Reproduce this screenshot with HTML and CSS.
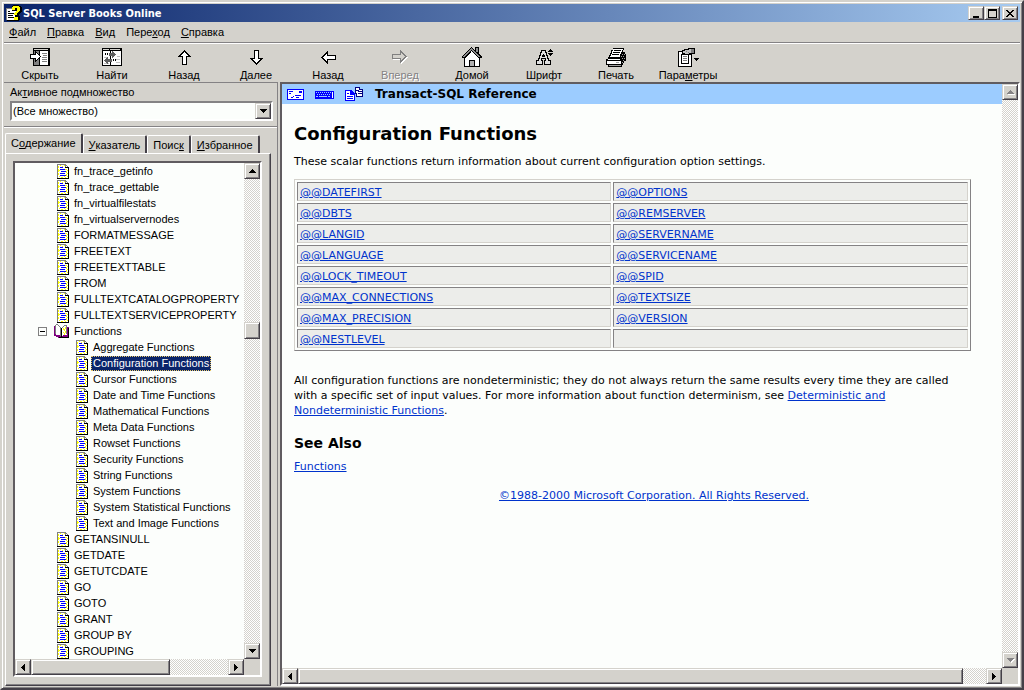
FILE: index.html
```html
<!DOCTYPE html>
<html lang="ru">
<head>
  <meta charset="UTF-8">
  <meta name="viewport" content="width=device-width, initial-scale=1.0">
  <title>SQL Server Books Online</title>
  <link rel="stylesheet" href="styles.css">
</head>
<body>

  <!-- Shared icons -->
  <svg class="sprite" aria-hidden="true">
    <symbol id="topic" viewBox="0 0 12 15">
      <path fill="#fff" d="M1 1h7l3 3v10H1z"/>
      <path fill="#ffff00" d="M1 2h1v2H1zM3 1h1v1H3zM5 2h1v1H5zM7 1h1v1H7zM1 5h1v3H1zM2 6h1v1H2zM8 5h2v1H8zM9 7h1v2H9zM1 9h1v2H1zM9 10h1v2H9zM2 12h1v1H2zM4 13h2v1H4zM7 12h1v1H7zM8 13h1v1H8zM10 12h1v1h-1zM10 6h1v1h-1zM10 9h1v1h-1z"/>
      <path fill="#808080" d="M0 0h9v1H0zM0 1h1v13H0zM8 1h1v2H8zM9 1h1v1H9zM10 2h1v1h-1z"/>
      <path fill="#000" d="M8 3h4v1H8zM11 4h1v11h-1zM0 14h12v1H0z"/>
      <path fill="#0000ff" d="M3 3h3v1H3zM3 5h5v1H3zM4 7h5v1H4zM3 9h5v1H3zM3 11h6v1H3z"/>
    </symbol>
    <symbol id="up" viewBox="0 0 7 4"><path d="M3 0h1v1h1v1h1v1h1v1H0V3h1V2h1V1h1z"/></symbol>
    <symbol id="down" viewBox="0 0 7 4"><path d="M0 0h7v1H6v1H5v1H4v1H3V3H2V2H1V1H0z"/></symbol>
    <symbol id="left" viewBox="0 0 4 7"><path d="M4 0v7H3V6H2V5H1V4H0V3h1V2h1V1h1V0z"/></symbol>
    <symbol id="right" viewBox="0 0 4 7"><path d="M0 0v7h1V6h1V5h1V4h1V3H3V2H2V1H1V0z"/></symbol>
  </svg>

  <div class="window">
    <header class="titlebar">
      <svg class="app-icon" width="16" height="16" viewBox="0 0 16 16">
        <path fill="#808080" d="M0 3h9v1H1v11H0z"/>
        <path fill="#fff" d="M1 4h9v11H1z"/>
        <path fill="#000" d="M2 6h2v1H2zM2 8h6v1H2zM2 10h5v1H2zM2 12h6v1H2zM10 12h1v4H1v-1h9z"/>
        <path fill="#000" d="M6 1h1V0h6v1h2v1h1v5h-1v1h-1v1h-1v2h1v4h-1v1H8v-4h1V8h1V6H6z"/>
        <path fill="#ffff00" d="M6 2h1V1h6v1h1v4h-1v1h-1v1h-1v2H8V8h1V7h1V6h1V3H9v2H6zM8 12h4v3H8z"/>
      </svg>
      <h1 class="caption">SQL Server Books Online</h1>
      <button class="win-button" aria-label="Свернуть"><svg width="9" height="9" viewBox="0 0 9 9"><path d="M1 7h6v2H1z"/></svg></button>
      <button class="win-button" aria-label="Развернуть"><svg width="9" height="9" viewBox="0 0 9 9"><path fill-rule="evenodd" d="M0 0h9v9H0zM1 2v6h7V2z"/></svg></button>
      <button class="win-button close" aria-label="Закрыть"><svg width="8" height="7" viewBox="0 0 8 7"><path d="M0 0h2v1h1v1h2V1h1V0h2v1H7v1H6v1H5v1h1v1h1v1h1v1H6V6H5V5H3v1H2v1H0V6h1V5h1V4h1V3H2V2H1V1H0z"/></svg></button>
    </header>

    <nav class="menu">
      <a href="#file"><u>Ф</u>айл</a>
      <a href="#edit"><u>П</u>равка</a>
      <a href="#view"><u>В</u>ид</a>
      <a href="#go">Пере<u>х</u>од</a>
      <a href="#help"><u>С</u>правка</a>
    </nav>

    <div class="toolbar">
      <button class="tool">
        <svg width="20" height="18" viewBox="0 0 20 18">
          <path d="M3 0h17v18H3z"/>
          <path fill="#d4d2cc" d="M4 1h14v1H4z"/>
          <path fill="#808080" d="M4 3h5v14H4z"/>
          <path fill="#fff" d="M10 3h8v14h-8z"/>
          <path fill="#808080" d="M12 5h5v1h-5zM13 7h4v1h-4zM12 9h5v1h-5zM12 11h5v1h-5zM12 13h5v1h-5z"/>
          <path d="M5 3h1v1h1v1h1v1h1v1h1v1h1v1h-1v1H9v1H8v1H7v1H6v1H5v-3H0V6h5z"/>
          <path fill="#fff" d="M6 5h1v1h1v1h1v1h1v1H9v1H8v1H7v1H6v-2H1V7h5z"/>
        </svg>
        <span>Скрыть</span>
      </button>
      <button class="tool">
        <svg width="20" height="18" viewBox="0 0 20 18">
          <path d="M0 0h20v18H0z"/>
          <path fill="#d4d2cc" d="M1 1h6v1H1zM8 1h10v1H8z"/>
          <path fill="#fff" d="M1 3h18v14H1z"/>
          <path fill="#c0c0c0" d="M2 9h4v1H2zM2 15h5v1H2zM15 8h3v1h-3zM14 11h4v1h-4zM14 14h4v1h-4z"/>
          <path d="M8 3h1v14H8zM3 5h1v2H3zM5 5h1v2H5zM11 11h1v2h-1zM13 11h1v2h-1z"/>
          <path fill="#606060" d="M7 5h3V3h1v1h1v1h1v1h1v1h-1v1h-1v1h-1v1h-1V8H7zM10 11H6V9H5v1H4v1H3v1H2v1h1v1h1v1h1v1h1v-2h4z"/>
        </svg>
        <span>Найти</span>
      </button>
      <button class="tool">
        <svg width="13" height="15" viewBox="0 0 13 15"><path d="M6 0h1v1h1v1h1v1h1v1h1v1h1v1h1v1H9v8H4V7H0V6h1V5h1V4h1V3h1V2h1V1h1z"/><path fill="#fff" d="M6 2h1v1h1v1h1v1h1v1H8v8H5V6H3V5h1V4h1V3h1z"/></svg>
        <span>Назад</span>
      </button>
      <button class="tool">
        <svg width="13" height="15" viewBox="0 0 13 15"><path d="M6 15h1v-1h1v-1h1v-1h1v-1h1v-1h1V9h1V8H9V0H4v8H0v1h1v1h1v1h1v1h1v1h1v1h1z"/><path fill="#fff" d="M6 13h1v-1h1v-1h1v-1h1V9H8V1H5v8H3v1h1v1h1v1h1z"/></svg>
        <span>Далее</span>
      </button>
      <button class="tool">
        <svg width="15" height="13" viewBox="0 0 15 13"><path d="M0 6v1h1v1h1v1h1v1h1v1h1v1h1v1h1V9h8V4H7V0H6v1H5v1H4v1H3v1H2v1H1v1z"/><path fill="#fff" d="M2 6v1h1v1h1v1h1v1h1V8h8V5H6V3H5v1H4v1H3v1z"/></svg>
        <span>Назад</span>
      </button>
      <button class="tool" disabled>
        <svg width="16" height="14" viewBox="0 0 16 14"><path fill="#fff" d="M9 1l7 7-7 6v-4H1V5h8z"/><path fill="#808080" d="M15 6v1h-1v1h-1v1h-1v1h-1v1h-1v1H9v1H8V9H0V4h8V0h1v1h1v1h1v1h1v1h1v1h1v1z"/><path fill="#d4d2cc" d="M13 6v1h-1v1h-1v1h-1v1H9V8H1V5h8V3h1v1h1v1h1v1z"/></svg>
        <span>Вперед</span>
      </button>
      <button class="tool">
        <svg width="20" height="20" viewBox="0 0 20 20">
          <path d="M9 0h1v1h1v1h1v1h1V0h4v7h1v1h1v1h1v2h-2v9H2v-9H0V9h1V8h1V7h1V6h1V5h1V4h1V3h1V2h1V1h1z"/>
          <path fill="#909090" d="M9 1h1v1h1v1h1v1h1v1h1v1h1v1h1v1h1v1h1v1h-2V9h-1V8h-1V7h-1V6h-1V5h-1V4h-1V3H9v1H8v1H7v1H6v1H5v1H4v1H3v1H1V9h1V8h1V7h1V6h1V5h1V4h1V3h1V2h1zM14 1h2v4h-2z"/>
          <path fill="#fff" d="M9 4h1v1h1v1h1v1h1v1h1v1h1v1h1v1h1v8h-4v-6H7v6H3v-8h1v-1h1V9h1V8h1V7h1V6h1z"/>
          <path fill="#b0b0b0" d="M8 14h4v5H8z"/>
        </svg>
        <span>Домой</span>
      </button>
      <button class="tool">
        <svg width="17" height="16" viewBox="0 0 17 16">
          <path d="M5 1h5v2h1v3h1v3h1v2h2v5H8v-5h1v-1H6v1h1v5H0v-5h2V9h1V6h1V3h1z"/>
          <path fill="#e0e0e0" d="M6 2h3v2h1v3h1v3h1v2h2v3H9v-3h1v-3H5v3h1v3H1v-3h2v-2h1V7h1V4h1z"/>
          <path d="M7 5h1v1h1v2H6V6h1zM14 0h1v1h1v1h1v1h-5V2h1V1h1zM12 4h5v1h-1v1h-1v1h-1V6h-1V5h-1z"/>
        </svg>
        <span>Шрифт</span>
      </button>
      <button class="tool">
        <svg width="21" height="19" viewBox="0 0 21 19">
          <path d="M7 0h11v2h-1v2h2v2h1v7h-2v2h-1v2h-1v2H2v-2H0v-6h2V9h1V7h1V5h1V2h2z"/>
          <path fill="#fff" d="M7 1h10v1h-1v2h-1v2h-1v3H4V8h1V6h1V3h1zM2 11h12v1H2zM1 13h14v3H1z"/>
          <path d="M8 2h7v1H8zM7 4h7v1H7zM6 6h7v1H6z"/>
          <path fill="#a0a0a0" d="M16 6h1v1h-1zM18 6h1v1h-1zM15 8h1v1h-1zM17 8h1v1h-1zM16 10h1v1h-1zM18 10h1v1h-1zM17 12h1v1h-1zM16 14h1v1h-1zM3 17h12v1H3zM10 14h3v1h-3z"/>
        </svg>
        <span>Печать</span>
      </button>
      <button class="tool">
        <svg width="21" height="19" viewBox="0 0 21 19">
          <path d="M0 3h4V2h2V1h4V0h7v6h-3v13H0z"/>
          <path fill="#fff" d="M1 4h3v2h4v1h5v11H1z"/>
          <path fill="#c0c0c0" d="M5 3h2V2h4V1h2v4h-2v1H7V5H5z"/>
          <path fill="#808080" d="M13 1h3v4h-3zM8 3h1v1H8zM10 4h1v1h-1z"/>
          <path d="M3 6h7v1H3zM3 7h1v8H3zM10 7h1v8h-1zM3 15h8v1H3z"/>
          <path fill="#808080" d="M5 8h4v1H5zM5 10h4v1H5zM5 12h4v1H5z"/>
          <path d="M16 10h5v1h-1v1h-1v1h-1v-1h-1v-1h-1z"/>
        </svg>
        <span>Пара<u>м</u>етры</span>
      </button>
    </div>

    <div class="panes">
      <aside class="sidebar">
        <div class="subset">
          <label for="subset">Ак<u>т</u>ивное подмножество</label>
          <div class="combo">
            <select id="subset"><option>(Все множество)</option></select>
            <span class="combo-arrow"><svg width="7" height="4"><use href="#down"/></svg></span>
          </div>
        </div>

        <div class="tabs">
          <button class="tab active">С<u>о</u>держание</button>
          <button class="tab"><u>У</u>казатель</button>
          <button class="tab">Поис<u>к</u></button>
          <button class="tab"><u>И</u>збранное</button>
        </div>

        <div class="tab-panel">
          <div class="tree-box">
            <ul class="tree">
              <li><a href="#"><svg width="12" height="15"><use href="#topic"/></svg><span>fn_trace_getinfo</span></a></li>
              <li><a href="#"><svg width="12" height="15"><use href="#topic"/></svg><span>fn_trace_gettable</span></a></li>
              <li><a href="#"><svg width="12" height="15"><use href="#topic"/></svg><span>fn_virtualfilestats</span></a></li>
              <li><a href="#"><svg width="12" height="15"><use href="#topic"/></svg><span>fn_virtualservernodes</span></a></li>
              <li><a href="#"><svg width="12" height="15"><use href="#topic"/></svg><span>FORMATMESSAGE</span></a></li>
              <li><a href="#"><svg width="12" height="15"><use href="#topic"/></svg><span>FREETEXT</span></a></li>
              <li><a href="#"><svg width="12" height="15"><use href="#topic"/></svg><span>FREETEXTTABLE</span></a></li>
              <li><a href="#"><svg width="12" height="15"><use href="#topic"/></svg><span>FROM</span></a></li>
              <li><a href="#"><svg width="12" height="15"><use href="#topic"/></svg><span>FULLTEXTCATALOGPROPERTY</span></a></li>
              <li><a href="#"><svg width="12" height="15"><use href="#topic"/></svg><span>FULLTEXTSERVICEPROPERTY</span></a></li>
              <li class="open">
                <a href="#">
                  <svg class="toggle" width="9" height="9" viewBox="0 0 9 9"><path fill="#808080" fill-rule="evenodd" d="M0 0h9v9H0zM1 1v7h7V1z"/><path d="M2 4h5v1H2z"/></svg>
                  <svg width="15" height="14" viewBox="0 0 15 14">
                    <path fill="#800080" d="M0 2h2v9h4v1h3v-1h4V3h2v11H4v-1H2v-1H0z"/>
                    <path fill="#fff" d="M2 1h2v1h1v1h1v1h1v8H6v-1H5v-1H2zM8 4h1V3h1V2h3v9H9v1H8z"/>
                    <path fill="#808080" d="M2 0h2v1H2zM4 1h1v1H4zM5 2h1v1H5zM6 3h1v9H6zM1 1h1v9H1zM8 3h1v1H8zM9 2h1v1H9zM10 1h3v1h-3zM12 2h1v8h-1z"/>
                    <path fill="#ffff00" d="M9 4h1v2H9zM11 3h1v2h-1zM10 5h1v2h-1zM9 8h1v1H9zM11 7h1v2h-1zM10 9h1v2h-1z"/>
                    <path d="M7 4h1v9H7zM14 4h1v10H5v-1h9z"/>
                  </svg>
                  <span>Functions</span>
                </a>
                <ul>
                  <li><a href="#"><svg width="12" height="15"><use href="#topic"/></svg><span>Aggregate Functions</span></a></li>
                  <li><a href="#" class="selected"><svg width="12" height="15"><use href="#topic"/></svg><span>Configuration Functions</span></a></li>
                  <li><a href="#"><svg width="12" height="15"><use href="#topic"/></svg><span>Cursor Functions</span></a></li>
                  <li><a href="#"><svg width="12" height="15"><use href="#topic"/></svg><span>Date and Time Functions</span></a></li>
                  <li><a href="#"><svg width="12" height="15"><use href="#topic"/></svg><span>Mathematical Functions</span></a></li>
                  <li><a href="#"><svg width="12" height="15"><use href="#topic"/></svg><span>Meta Data Functions</span></a></li>
                  <li><a href="#"><svg width="12" height="15"><use href="#topic"/></svg><span>Rowset Functions</span></a></li>
                  <li><a href="#"><svg width="12" height="15"><use href="#topic"/></svg><span>Security Functions</span></a></li>
                  <li><a href="#"><svg width="12" height="15"><use href="#topic"/></svg><span>String Functions</span></a></li>
                  <li><a href="#"><svg width="12" height="15"><use href="#topic"/></svg><span>System Functions</span></a></li>
                  <li><a href="#"><svg width="12" height="15"><use href="#topic"/></svg><span>System Statistical Functions</span></a></li>
                  <li><a href="#"><svg width="12" height="15"><use href="#topic"/></svg><span>Text and Image Functions</span></a></li>
                </ul>
              </li>
              <li><a href="#"><svg width="12" height="15"><use href="#topic"/></svg><span>GETANSINULL</span></a></li>
              <li><a href="#"><svg width="12" height="15"><use href="#topic"/></svg><span>GETDATE</span></a></li>
              <li><a href="#"><svg width="12" height="15"><use href="#topic"/></svg><span>GETUTCDATE</span></a></li>
              <li><a href="#"><svg width="12" height="15"><use href="#topic"/></svg><span>GO</span></a></li>
              <li><a href="#"><svg width="12" height="15"><use href="#topic"/></svg><span>GOTO</span></a></li>
              <li><a href="#"><svg width="12" height="15"><use href="#topic"/></svg><span>GRANT</span></a></li>
              <li><a href="#"><svg width="12" height="15"><use href="#topic"/></svg><span>GROUP BY</span></a></li>
              <li><a href="#"><svg width="12" height="15"><use href="#topic"/></svg><span>GROUPING</span></a></li>
            </ul>
            <div class="scroll vertical">
              <button class="arrow" aria-label="Вверх"><svg width="7" height="4"><use href="#up"/></svg></button>
              <div class="track tree-before"></div>
              <div class="thumb small"></div>
              <div class="track tree-after"></div>
              <button class="arrow" aria-label="Вниз"><svg width="7" height="4"><use href="#down"/></svg></button>
            </div>
            <div class="scroll">
              <button class="arrow" aria-label="Влево"><svg width="4" height="7"><use href="#left"/></svg></button>
              <div class="thumb tree-thumb"></div>
              <div class="track tree-rest"></div>
              <button class="arrow" aria-label="Вправо"><svg width="4" height="7"><use href="#right"/></svg></button>
            </div>
          </div>
        </div>
      </aside>

      <main class="viewer">
        <div class="page">
          <div class="banner">
            <a href="#feedback" aria-label="Feedback">
              <svg width="17" height="11" viewBox="0 0 17 11"><path fill="#0000ff" d="M0 0h17v11H0z"/><path fill="#fff" d="M1 1h15v9H1z"/><path fill="#0000ff" d="M2 2h4v1H2zM2 4h2v1H2zM12 2h3v2h-3zM8 6h6v1H8zM4 8h2v1H4zM6 7h1v1H6zM9 8h3v1H9z"/></svg>
            </a>
            <a href="#contents" aria-label="Contents">
              <svg width="19" height="9" viewBox="0 0 19 9"><path fill="#0000ff" d="M0 1h19v8H0z"/><path fill="#9cccff" d="M1 2h1v1H1zM3 2h1v1H3zM5 2h1v1H5zM7 2h1v1H7zM9 2h1v1H9zM11 2h1v1h-1zM13 2h1v1h-1zM15 2h1v1h-1zM2 4h1v1H2zM4 4h1v1H4zM6 4h1v1H6zM8 4h1v1H8zM10 4h1v1h-1zM12 4h1v1h-1zM14 4h1v1h-1zM1 6h2v1H1zM4 6h8v1H4zM13 6h2v1h-2z"/><path fill="#fff" d="M17 2h1v6h-1z"/></svg>
            </a>
            <a href="#related" aria-label="Related topics">
              <svg width="19" height="14" viewBox="0 0 19 14"><path fill="#0000ff" d="M0 3h6l4 4v7H0z"/><path fill="#000080" d="M10 0h5v2h3v8h-7V7h-1z"/><path fill="#fff" d="M1 4h4v4h4v5H1zM11 1h3v2h3v6h-5V6h-1z"/><path fill="#0000ff" d="M2 6h2v1H2zM2 9h6v1H2zM2 11h6v1H2z"/><path fill="#000080" d="M11 3h3v1h-3zM13 4h4v1h-4zM13 6h4v1h-4z"/></svg>
            </a>
            <strong>Transact-SQL Reference</strong>
          </div>

          <article class="topic">
            <h2>Configuration Functions</h2>
            <p>These scalar functions return information about current configuration option settings.</p>
            <table>
              <tr><td class="first"><a href="#">@@DATEFIRST</a></td><td><a href="#">@@OPTIONS</a></td></tr>
              <tr><td><a href="#">@@DBTS</a></td><td><a href="#">@@REMSERVER</a></td></tr>
              <tr><td><a href="#">@@LANGID</a></td><td><a href="#">@@SERVERNAME</a></td></tr>
              <tr><td><a href="#">@@LANGUAGE</a></td><td><a href="#">@@SERVICENAME</a></td></tr>
              <tr><td><a href="#">@@LOCK_TIMEOUT</a></td><td><a href="#">@@SPID</a></td></tr>
              <tr><td><a href="#">@@MAX_CONNECTIONS</a></td><td><a href="#">@@TEXTSIZE</a></td></tr>
              <tr><td><a href="#">@@MAX_PRECISION</a></td><td><a href="#">@@VERSION</a></td></tr>
              <tr><td><a href="#">@@NESTLEVEL</a></td><td>&nbsp;</td></tr>
            </table>
            <p>All configuration functions are nondeterministic; they do not always return the same results every time they are called with a specific set of input values. For more information about function determinism, see <a href="#">Deterministic and Nondeterministic Functions</a>.</p>
            <h3>See Also</h3>
            <p><a href="#">Functions</a></p>
            <footer><a href="#">©1988-2000 Microsoft Corporation. All Rights Reserved.</a></footer>
          </article>
        </div>
        <div class="scroll vertical">
          <button class="arrow" aria-label="Вверх" disabled><svg width="7" height="4"><use href="#up"/></svg></button>
          <div class="track"></div>
          <button class="arrow" aria-label="Вниз" disabled><svg width="7" height="4"><use href="#down"/></svg></button>
        </div>
        <div class="scroll">
          <button class="arrow" aria-label="Влево"><svg width="4" height="7"><use href="#left"/></svg></button>
          <div class="thumb page-thumb"></div>
          <div class="track page-rest"></div>
          <button class="arrow" aria-label="Вправо"><svg width="4" height="7"><use href="#right"/></svg></button>
        </div>
      </main>
    </div>
  </div>

</body>
</html>
```
FILE: styles.css
```css
* {
  box-sizing: border-box;
}

body {
  margin: 0;
  font-family: "Liberation Sans", Arial, sans-serif;
  font-size: 11px;
  line-height: 16px;
  color: #000;
}

button,
select {
  font: inherit;
  color: inherit;
  border-radius: 0;
}

button {
  display: flex;
  align-items: center;
  justify-content: center;
  margin: 0;
  padding: 0;
  border: 0;
  background: #d4d2cc;
}

svg {
  flex: none;
  shape-rendering: crispEdges;
}

.sprite {
  display: none;
}

/* Window frame */
.window {
  display: flex;
  flex-direction: column;
  height: 100vh;
  padding: 2px;
  background: #d4d2cc;
  border: 2px solid;
  border-color: #d4d2cc #444048 #444048 #d4d2cc;
  box-shadow: inset 1px 1px #fff, inset -1px -1px #848284;
}

.titlebar {
  display: flex;
  align-items: center;
  flex: none;
  height: 18px;
  padding: 0 2px;
  background: linear-gradient(to right, #0a246a, #a6caf0);
}

.caption {
  flex: 1;
  margin: 1px 0 0 1px;
  font-family: "DejaVu Sans Condensed", "DejaVu Sans", sans-serif;
  font-size: 11px;
  color: #fff;
}

.win-button,
.arrow,
.thumb,
.combo-arrow {
  background: #d4d2cc;
  border: 1px solid;
  border-color: #d4d2cc #444048 #444048 #d4d2cc;
  box-shadow: inset 1px 1px #fff, inset -1px -1px #848284;
}

.win-button {
  width: 16px;
  height: 14px;
}

.close {
  margin-left: 2px;
}

.menu {
  display: flex;
  align-items: center;
  flex: none;
  gap: 11px;
  height: 21px;
  padding: 0 5px;
  border-bottom: 1px solid #848284;
}

.menu a {
  color: #000;
  text-decoration: none;
}

.toolbar {
  display: flex;
  flex: none;
  height: 39px;
  border-top: 1px solid #fff;
}

.tool {
  flex-direction: column;
  justify-content: flex-end;
  width: 72px;
  padding-top: 2px;
  line-height: 14px;
}

.tool svg {
  margin: auto;
}

.tool:disabled {
  color: #848284;
  text-shadow: 1px 1px #fff;
}

.panes {
  display: flex;
  flex: 1;
  min-height: 0;
  gap: 2px;
}

/* Navigation pane */
.sidebar {
  display: flex;
  flex-direction: column;
  flex: none;
  width: 274px;
  border-top: 1px solid #848284;
  border-right: 1px solid #848284;
}

.subset {
  padding: 1px 0 5px 6px;
  border-bottom: 1px solid #848284;
  box-shadow: 0 1px #fff;
}

.subset label {
  display: block;
}

.combo {
  position: relative;
  margin-top: 1px;
}

.combo select {
  display: block;
  width: 263px;
  height: 20px;
  padding: 0 1px;
  appearance: none;
  background: #fcfefc;
  border: 2px solid;
  border-color: #848284 #fff #fff #848284;
}

.combo-arrow {
  position: absolute;
  top: 2px;
  right: 6px;
  display: flex;
  align-items: center;
  justify-content: center;
  width: 16px;
  height: 16px;
  pointer-events: none;
}

.tabs {
  display: flex;
  align-items: flex-end;
  flex: none;
  height: 26px;
  padding-left: 1px;
}

.tab {
  height: 18px;
  padding: 0 5px;
  border: 1px solid #fff;
  border-right: 2px solid #444048;
  border-bottom: 0;
  border-radius: 2px 2px 0 0;
}

.tab.active {
  height: 20px;
  padding: 0 5px 2px;
}

.tab-panel {
  display: flex;
  flex: 1;
  min-height: 0;
  margin: 0 6px 0 1px;
  padding: 7px 8px 8px 7px;
  border: 1px solid;
  border-color: #fff #444048 #444048 #fff;
  box-shadow: inset -1px -1px #848284;
}

.tree-box,
.viewer {
  display: grid;
  grid-template-columns: minmax(0, 1fr) 16px;
  grid-template-rows: minmax(0, 1fr) 16px;
  flex: 1;
  min-width: 0;
  border: 2px solid;
  border-color: #605c60 #fff #fff #605c60;
}

.tree {
  overflow: hidden;
  margin: 0;
  padding: 0 0 0 42px;
  list-style: none;
  background: #fcfefc;
}

.tree ul {
  margin: 0;
  padding: 0 0 0 19px;
  list-style: none;
}

.tree a {
  display: flex;
  align-items: center;
  gap: 3px;
  height: 16px;
  color: #000;
  text-decoration: none;
  white-space: nowrap;
}

.tree span {
  padding: 0 2px;
  line-height: 15px;
}

.tree .open > a {
  margin-left: -19px;
}

.toggle {
  margin-right: 4px;
}

.tree .selected span {
  color: #fff;
  background: #0a246a;
  outline: 1px dotted #e8c868;
  outline-offset: -1px;
}

/* Scroll bars */
.scroll {
  display: flex;
}

.vertical {
  flex-direction: column;
}

.arrow {
  flex: none;
  width: 16px;
  height: 16px;
}

.arrow:disabled {
  fill: #848284;
}

.arrow:disabled svg {
  filter: drop-shadow(1px 1px #fff);
}

.track {
  flex: 1;
  background: conic-gradient(#d4d2cc 25%, #fff 0 50%, #d4d2cc 0 75%, #fff 0) 0 0 / 2px 2px;
}

.small {
  flex: none;
  height: 17px;
}

.tree-before {
  flex-grow: 143;
}

.tree-after {
  flex-grow: 304;
}

.tree-thumb {
  flex: 139;
}

.tree-rest {
  flex-grow: 59;
}

.page-thumb {
  flex: 665;
}

.page-rest {
  flex-grow: 23;
}

/* Topic page */
.page {
  overflow: hidden;
  background: #fcfefc;
  font-family: Verdana, "DejaVu Sans", sans-serif;
  line-height: 15px;
}

.page a {
  color: #0033cc;
}

.banner {
  display: flex;
  align-items: center;
  gap: 11px;
  height: 20px;
  padding-left: 5px;
  background: #9cccff;
}

.banner a {
  display: flex;
}

.banner strong {
  font-size: 12px;
}

.topic {
  width: 100%;
  margin-left: 12px;
}

.topic h2 {
  margin: 18px 0 0;
  font-size: 18px;
  line-height: 24px;
}

.topic p {
  width: 94%;
  margin: 8px 0;
}

.topic table {
  width: 94%;
  margin: 10px 0 22px;
  border: 1px solid;
  border-color: #d4d2cc #848284 #848284 #d4d2cc;
  border-spacing: 2px;
}

.topic td {
  height: 19px;
  padding: 2px 2px 0;
  background: #ecedea;
  border: 1px solid;
  border-color: #848284 #d4d2cc #d4d2cc #848284;
}

.first {
  width: 47%;
}

.topic h3 {
  margin: 16px 0 0;
  font-size: 14px;
  line-height: 18px;
}

.topic h3 + p {
  margin-top: 7px;
}

.topic footer {
  margin-top: 14px;
  text-align: center;
}
```
